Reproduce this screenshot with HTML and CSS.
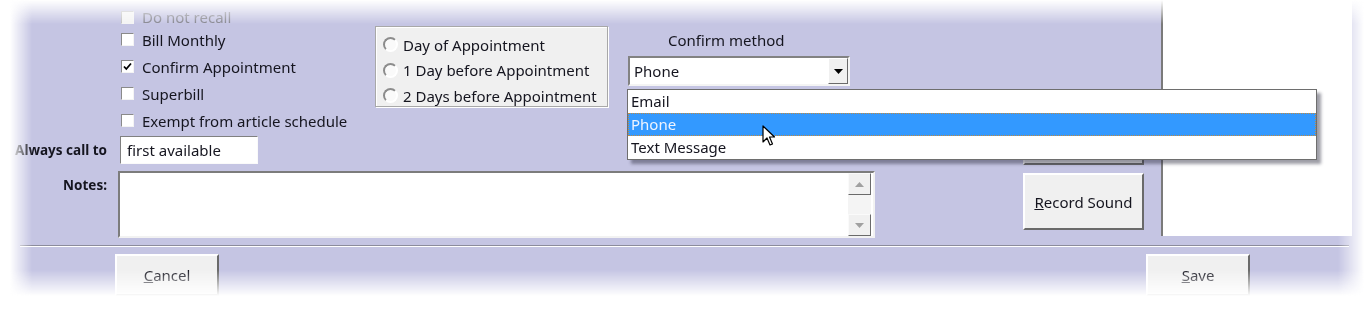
FILE: index.html
```html
<!DOCTYPE html>
<html lang="en">
<head>
    <meta charset="UTF-8">
    <meta name="viewport" content="width=device-width, initial-scale=1.0">
    <title>Appointment options</title>
    <link rel="stylesheet" href="styles.css">
</head>

<body>
    <div class="fade">
        <div class="window">
            <div class="main">
                <div class="fields">
                    <div class="label"></div>
                    <div class="options">
                        <div class="checklist">
                            <label class="check disabled"><span class="box"></span>Do not recall</label>
                            <label class="check"><span class="box"></span>Bill Monthly</label>
                            <label class="check"><span class="box checked">
                                <svg width="9" height="9" viewBox="0 0 9 9"><path d="M1 4.5 L3.3 7 L8 1.5" fill="none" stroke="#000" stroke-width="1.8"/></svg>
                            </span>Confirm Appointment</label>
                            <label class="check"><span class="box"></span>Superbill</label>
                            <label class="check"><span class="box"></span>Exempt from article schedule</label>
                        </div>

                        <div class="radio-box">
                            <label class="radio"><span class="dot"></span>Day of Appointment</label>
                            <label class="radio"><span class="dot"></span>1 Day before Appointment</label>
                            <label class="radio"><span class="dot"></span>2 Days before Appointment</label>
                        </div>

                        <div class="confirm">
                            <div class="confirm-title">Confirm method</div>
                            <div class="select">
                                <span>Phone</span>
                                <span class="arrow">
                                    <svg width="9" height="5" viewBox="0 0 9 5"><path d="M0 0 H9 L4.5 5 Z" fill="#000"/></svg>
                                </span>
                            </div>
                            <ul class="dropdown">
                                <li>Email</li>
                                <li class="selected">Phone</li>
                                <li>Text Message</li>
                            </ul>
                            <svg class="cursor" width="14" height="22" viewBox="0 0 14 22">
                                <path d="M1 1 L1 17 L5 13 L8 20 L10.5 19 L7.5 12 L12.5 12 Z" fill="#fff" stroke="#000" stroke-width="1.2" stroke-linejoin="round"/>
                            </svg>
                        </div>
                    </div>

                    <div class="label row-call">Always call to</div>
                    <div class="row-call"><input class="text-input" type="text" value="first available"></div>

                    <div class="label row-notes">Notes:</div>
                    <div class="row-notes">
                        <div class="notes">
                            <div class="notes-text"></div>
                            <div class="scrollbar">
                                <span class="scroll-btn">
                                    <svg width="9" height="5" viewBox="0 0 9 5"><path d="M0 5 H9 L4.5 0 Z" fill="#a0a0a0"/></svg>
                                </span>
                                <span class="track"></span>
                                <span class="scroll-btn">
                                    <svg width="9" height="5" viewBox="0 0 9 5"><path d="M0 0 H9 L4.5 5 Z" fill="#a0a0a0"/></svg>
                                </span>
                            </div>
                        </div>
                    </div>
                </div>

                <div class="side-buttons">
                    <button class="btn tall" type="button"><u>P</u>lay Sound</button>
                    <button class="btn tall" type="button"><u>R</u>ecord Sound</button>
                </div>

                <div class="preview"></div>
            </div>

            <div class="separator"></div>

            <div class="footer">
                <button class="btn flat" type="button"><u>C</u>ancel</button>
                <button class="btn flat" type="button"><u>S</u>ave</button>
            </div>
        </div>
    </div>
</body>
</html>
```

FILE: styles.css
```css
body {
    margin: 0;
    padding: 0;
    background-color: #fff;
    font-family: "Noto Sans", "Open Sans", sans-serif;
    font-size: 15px;
    color: #15151f;
    overflow: hidden;
}

/* faded cut-out edges of the screenshot */
.fade {
    width: 1364px;
    height: 325px;
    -webkit-mask-image: linear-gradient(to right, transparent 10px, #000 32px, #000 1338px, transparent 1364px);
    mask-image: linear-gradient(to right, transparent 10px, #000 32px, #000 1338px, transparent 1364px);
}

.window {
    height: 325px;
    background-color: #c5c5e3;
    -webkit-mask-image: linear-gradient(to bottom, transparent 0, #000 24px, #000 270px, transparent 296px);
    mask-image: linear-gradient(to bottom, transparent 0, #000 24px, #000 270px, transparent 296px);
}

.main {
    display: flex;
    height: 237px;
}

.fields {
    width: 1023px;
    display: grid;
    grid-template-columns: 118px 1fr;
    grid-template-rows: 128px 28px 66px;
    align-content: start;
    padding-top: 8px;
    box-sizing: border-box;
}

.label {
    font-weight: bold;
    font-size: 13.5px;
    text-align: right;
    padding-right: 11px;
    line-height: 28px;
}

.options {
    display: flex;
    align-items: flex-start;
    position: relative;
}

.checklist {
    width: 257px;
    padding-left: 3px;
    box-sizing: border-box;
}

.check {
    display: flex;
    align-items: center;
    height: 27px;
    white-space: nowrap;
}

.check:first-child {
    height: 18px;
}

.check.disabled {
    color: #85858f;
}

.box {
    width: 11px;
    height: 11px;
    border: 1px solid;
    border-color: #8a8a8a #f4f4f4 #f4f4f4 #8a8a8a;
    background-color: #fff;
    margin-right: 8px;
    display: flex;
    align-items: center;
    justify-content: center;
}

.disabled .box {
    border-color: #c0c0c0 #f4f4f4 #f4f4f4 #c0c0c0;
    background-color: #f3f3f3;
}

.radio-box {
    margin-top: 18px;
    width: 233px;
    height: 81px;
    box-sizing: border-box;
    background-color: #f0f0f0;
    border: 1px solid #a8a8a8;
    box-shadow: inset 1px 1px 0 #fff, 1px 1px 0 #fff;
    padding: 5px 0 0 7px;
}

.radio {
    display: flex;
    align-items: center;
    height: 25.5px;
    white-space: nowrap;
}

.dot {
    width: 11px;
    height: 11px;
    border-radius: 50%;
    border: 2px solid;
    border-color: #8c8c8c #fff #fff #8c8c8c;
    background-color: #fafafa;
    margin-right: 5px;
}

.confirm {
    margin-left: 20px;
    width: 222px;
    position: relative;
}

.confirm-title {
    padding-left: 40px;
    line-height: 20px;
    margin-top: 22px;
}

.select {
    margin-top: 6px;
    height: 30px;
    box-sizing: border-box;
    background-color: #fff;
    border: 2px solid;
    border-color: #828282 #f4f4f4 #f4f4f4 #828282;
    display: flex;
    align-items: center;
    justify-content: space-between;
    padding-left: 4px;
}

.arrow {
    width: 20px;
    height: 26px;
    box-sizing: border-box;
    background-color: #f0f0f0;
    border: 1px solid;
    border-color: #fff #6a6a6a #6a6a6a #fff;
    display: flex;
    align-items: center;
    justify-content: center;
}

.dropdown {
    position: absolute;
    top: 81px;
    left: -1px;
    width: 688px;
    margin: 0;
    padding: 0;
    list-style: none;
    background-color: #fff;
    border: 1px solid #6e6e6e;
    box-shadow: 4px 4px 3px rgba(40, 40, 60, 0.45);
    z-index: 2;
}

.dropdown li {
    height: 23px;
    line-height: 23px;
    padding-left: 3px;
    box-sizing: border-box;
}

.dropdown li.selected {
    background-color: #3399ff;
    color: #eef4ff;
    outline: 1px dotted #c08a40;
    outline-offset: -1px;
}

.cursor {
    position: absolute;
    top: 117px;
    left: 134px;
    z-index: 3;
}

.row-call {
    align-self: center;
}

.text-input {
    margin-left: 2px;
    width: 138px;
    height: 28px;
    box-sizing: border-box;
    border: 1px solid;
    border-color: #808080 #fafafa #fafafa #808080;
    background-color: #fff;
    font-family: inherit;
    font-size: 15px;
    color: inherit;
    padding: 0 6px;
}

.row-notes {
    margin-top: 7px;
}

.notes {
    width: 757px;
    height: 67px;
    box-sizing: border-box;
    border: 2px solid;
    border-color: #7c7c7c #f2f2f2 #f2f2f2 #7c7c7c;
    background-color: #fff;
    display: flex;
}

.notes-text {
    flex: 1;
}

.scrollbar {
    width: 23px;
    display: flex;
    flex-direction: column;
    margin-right: 2px;
}

.scroll-btn {
    height: 22px;
    box-sizing: border-box;
    background-color: #f0f0f0;
    border: 1px solid;
    border-color: #fafafa #6a6a6a #6a6a6a #fafafa;
    display: flex;
    align-items: center;
    justify-content: center;
}

.track {
    flex: 1;
    background-color: #f4f4f4;
}

.side-buttons {
    width: 121px;
    display: flex;
    flex-direction: column;
    justify-content: flex-end;
    gap: 8px;
    padding-bottom: 7px;
}

.btn {
    font-family: inherit;
    font-size: 15px;
    color: #15151f;
    background-color: #f0f0f0;
    border: 2px solid;
    border-color: #fff #6a6a6a #6a6a6a #fff;
    padding: 0;
}

.btn u {
    text-decoration-thickness: 1px;
}

.btn.tall {
    height: 57px;
}

.preview {
    margin-left: 17px;
    width: 191px;
    height: 236px;
    box-sizing: border-box;
    background-color: #fff;
    border-left: 2px solid #7a7a7a;
}

.separator {
    margin: 8px 15px 0 20px;
    height: 1px;
    border-top: 1px solid #8c8c9c;
    background-color: #fff;
}

.footer {
    display: flex;
    justify-content: space-between;
    padding: 7px 114px 0 115px;
}

.btn.flat {
    width: 104px;
    height: 42px;
    border-color: #fff #6a6a6a #6a6a6a #fff;
}
```
